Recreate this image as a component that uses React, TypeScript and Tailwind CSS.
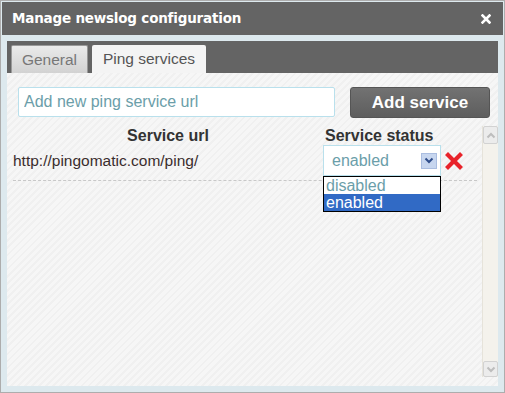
import { useState } from "react";

const stripes =
  "bg-[repeating-linear-gradient(135deg,#f6f6f6_0px,#f6f6f6_3px,#f0f0f0_3px,#f0f0f0_5px)]";

const CloseIcon = () => (
  <svg width="10" height="10" viewBox="0 0 10 10">
    <path d="M1.5 1.5 L8.5 8.5 M8.5 1.5 L1.5 8.5" stroke="#fff" strokeWidth="2.6" strokeLinecap="square" />
  </svg>
);

const RedX = () => (
  <svg width="18" height="18" viewBox="0 0 18 18">
    <path d="M3 3 L15 15 M15 3 L3 15" stroke="#e8232a" strokeWidth="4.2" strokeLinecap="square" />
  </svg>
);

const Chevron = ({ up, color }: { up?: boolean; color: string }) => (
  <svg width="10" height="7" viewBox="0 0 10 7">
    <path
      d={up ? "M1.5 5.5 L5 2 L8.5 5.5" : "M1.5 1.5 L5 5 L8.5 1.5"}
      stroke={color}
      strokeWidth="2"
      fill="none"
    />
  </svg>
);

const App = () => {
  const [tab, setTab] = useState<string>("ping");
  const [status, setStatus] = useState<string>("enabled");

  return (
    <div className="w-[505px] h-[393px] border border-[#adadad] p-px bg-[#dde9ee] flex flex-col font-['Liberation_Sans',Arial,sans-serif]">
      {/* title bar */}
      <div className="h-[33px] shrink-0 bg-[#646464] flex items-center justify-between pl-[10px] pr-[12px]">
        <span className="text-white font-bold text-[13.5px] font-['DejaVu_Sans',Verdana,sans-serif] tracking-[-0.2px]">
          Manage newslog configuration
        </span>
        <CloseIcon />
      </div>

      <div className="flex-1 flex flex-col pt-[6px] pl-[5px] pr-[5px] pb-[5px]">
        {/* tabs */}
        <div className="h-[32px] shrink-0 bg-[#646464] flex items-end gap-[4px] pl-[4px]">
          <button
            onClick={() => setTab("general")}
            className="h-[28px] w-[77px] rounded-t-[2px] border border-b-0 border-[#999] bg-[linear-gradient(#eaeaea,#d2d2d2)] text-[#777] text-[15.5px] leading-none"
          >
            General
          </button>
          <button
            onClick={() => setTab("ping")}
            className="h-[28px] w-[114px] rounded-t-[2px] bg-[#f4f4f4] text-[#555] text-[15.5px] leading-none"
          >
            Ping services
          </button>
        </div>

        {/* content */}
        <div className={`flex-1 flex flex-col ${stripes}`}>
          <div className="flex items-center pt-[12px] pl-[11px] pr-[8px] justify-between">
            <input
              placeholder="Add new ping service url"
              className="w-[317px] h-[30px] bg-white border border-[#b9e0ec] rounded-[2px] px-[5px] text-[16px] placeholder:text-[#6b9ea9] outline-none"
            />
            <button className="w-[140px] h-[31px] mt-[2px] rounded-[3px] border border-[#555] bg-[linear-gradient(#727272,#5e5e5e)] text-white font-bold text-[17px]">
              Add service
            </button>
          </div>

          <div className="flex-1 flex pt-[8px] pb-[9px]">
            <div className="flex-1 pl-[6px] pr-[5px]">
              <div className="flex h-[19px] items-center font-bold text-[16px] text-[#333]">
                <div className="w-[310px] text-center">Service url</div>
                <div className="pl-[2px]">Service status</div>
              </div>

              <div className="flex items-center h-[31px]">
                <div className="w-[310px] text-[15.5px] text-[#3a2d2d]">http://pingomatic.com/ping/</div>
                <div className="relative">
                  <div className="w-[118px] h-[31px] bg-white border border-[#b9e0ec] flex items-center justify-between pl-[8px] pr-[3px]">
                    <span className="text-[#6b9ea9] text-[16px]">{status}</span>
                    <span className="w-[16px] h-[16px] bg-[#c7d6ef] border border-[#aabde0] flex items-center justify-center">
                      <Chevron color="#2f4d8a" />
                    </span>
                  </div>
                  <div className="absolute left-0 top-[31px] w-[118px] border border-black bg-white text-[16px] leading-[17px] z-10">
                    <div
                      onClick={() => setStatus("disabled")}
                      className="px-[2px] text-[#6b9ea9]"
                    >
                      disabled
                    </div>
                    <div
                      onClick={() => setStatus("enabled")}
                      className="px-[2px] bg-[#316ac5] text-white"
                    >
                      enabled
                    </div>
                  </div>
                </div>
                <div className="ml-[4px]">
                  <RedX />
                </div>
              </div>

              <div className="mt-[4px] border-t border-dashed border-[#c8c8c8]" />
            </div>

            {/* scrollbar */}
            <div className="w-[16px] flex flex-col bg-[#f4f2ec] border-l border-[#e6e3da]">
              <div className="h-[18px] bg-[#ececec] border border-[#d2d2d2] rounded-[2px] flex items-center justify-center">
                <Chevron up color="#bdbdbd" />
              </div>
              <div className="flex-1" />
              <div className="h-[16px] bg-[#ececec] border border-[#d2d2d2] rounded-[2px] flex items-center justify-center">
                <Chevron color="#bdbdbd" />
              </div>
            </div>
          </div>
        </div>
      </div>
      {tab === "general" && null}
    </div>
  );
};

export default App;
